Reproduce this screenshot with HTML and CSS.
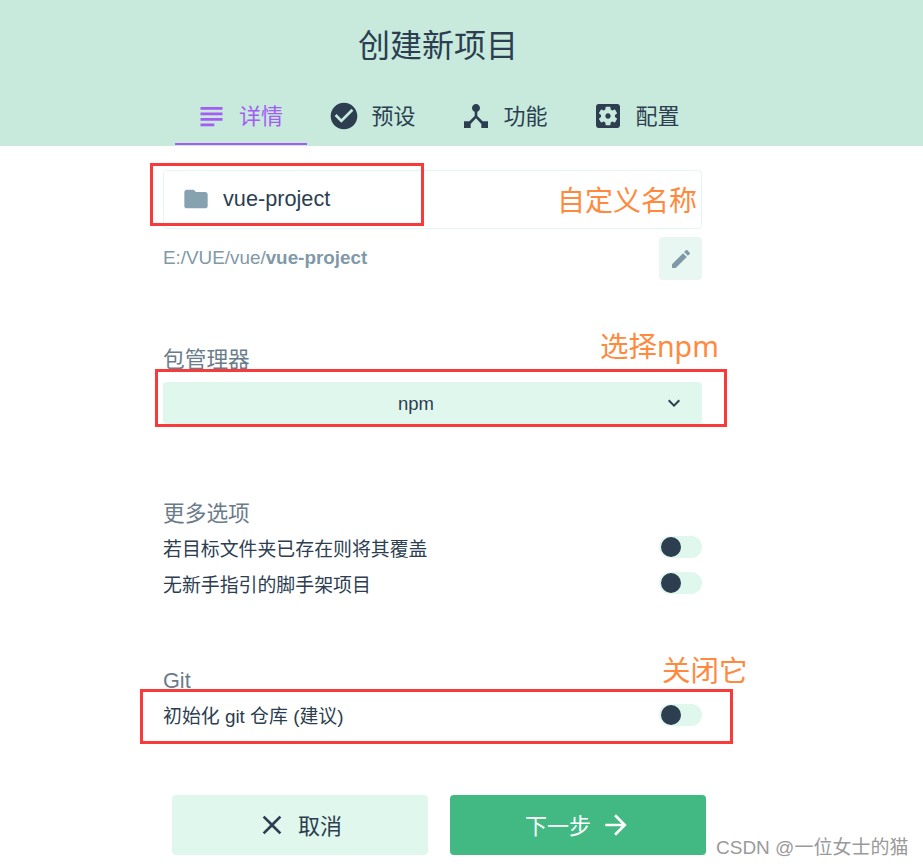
FILE: index.html

```html
<!DOCTYPE html>
<html lang="zh-CN">
<head>
  <meta charset="UTF-8">
  <meta name="viewport" content="width=device-width, initial-scale=1.0">
  <title>创建新项目</title>
  <link rel="stylesheet" href="styles.css">
</head>
<body>
  <div class="page">
    <header class="header">
      <h1 class="title">创建新项目</h1>
      <nav class="tabs">
        <div class="tab active">
          <svg width="33" height="33" viewBox="0 0 24 24" fill="currentColor"><path d="M14 17H4v2h10v-2zm6-8H4v2h16V9zM4 15h16v-2H4v2zM4 5v2h16V5H4z"/></svg>
          <span>详情</span>
        </div>
        <div class="tab">
          <svg width="32" height="32" viewBox="0 0 24 24" fill="currentColor"><path d="M12 2C6.480 2 2 6.480 2 12s4.480 10 10 10 10-4.480 10-10S17.520 2 12 2zm-2 15-5-5 1.410-1.410L10 14.170l7.590-7.590L19 8l-9 9z"/></svg>
          <span>预设</span>
        </div>
        <div class="tab">
          <svg width="32" height="32" viewBox="0 0 24 24" fill="currentColor"><path d="m17 16-4-4V8.820C14.160 8.400 15 7.300 15 6c0-1.660-1.340-3-3-3S9 4.340 9 6c0 1.300.840 2.400 2 2.820V12l-4 4H3v5h5v-3.050l4-4.200 4 4.200V21h5v-5h-4z"/></svg>
          <span>功能</span>
        </div>
        <div class="tab">
          <svg width="32" height="32" viewBox="0 0 24 24" fill="currentColor"><path d="M12 10c-1.100 0-2 .9-2 2s.9 2 2 2 2-.9 2-2-.9-2-2-2zm7-7H5c-1.110 0-2 .9-2 2v14c0 1.100.890 2 2 2h14c1.110 0 2-.9 2-2V5c0-1.100-.890-2-2-2zm-1.750 9c0 .23-.02.46-.05.68l1.480 1.160c.13.11.17.3.08.45l-1.400 2.420c-.09.15-.27.21-.43.15l-1.740-.7c-.36.28-.76.51-1.180.69l-.26 1.850c-.03.17-.18.3-.35.3h-2.800c-.17 0-.32-.13-.35-.29l-.26-1.850c-.43-.18-.82-.41-1.180-.69l-1.740.7c-.16.06-.34 0-.43-.15l-1.400-2.420c-.09-.15-.05-.34.08-.45l1.480-1.160c-.03-.23-.05-.46-.05-.69 0-.23.02-.46.05-.68l-1.480-1.160c-.13-.11-.17-.3-.08-.45l1.400-2.420c.09-.15.27-.21.43-.15l1.740.7c.36-.28.76-.51 1.180-.69l.26-1.850c.03-.17.18-.3.35-.3h2.800c.17 0 .32.13.35.29l.26 1.850c.43.18.82.41 1.180.69l1.740-.7c.16-.06.34 0 .43.15l1.400 2.420c.09.15.05.34-.08.45l-1.480 1.160c.03.23.05.46.05.69z"/></svg>
          <span>配置</span>
        </div>
      </nav>
    </header>

    <main class="content">
      <div class="name-input">
        <svg width="28" height="28" viewBox="0 0 24 24" fill="#86a1b0"><path d="M10 4H4c-1.100 0-2 .9-2 2v12c0 1.100.9 2 2 2h16c1.100 0 2-.9 2-2V8c0-1.100-.9-2-2-2h-8l-2-2z"/></svg>
        <span>vue-project</span>
      </div>
      <div class="path-row">
        <div class="path">E:/VUE/vue/<b>vue-project</b></div>
        <button class="edit-button">
          <svg width="24" height="24" viewBox="0 0 24 24" fill="#7f99a8"><path d="M3 17.250V21h3.750L17.810 9.940l-3.750-3.750L3 17.250zM20.710 7.040c.39-.39.39-1.020 0-1.410l-2.340-2.340c-.39-.39-1.020-.39-1.410 0l-1.830 1.830 3.750 3.750 1.830-1.830z"/></svg>
        </button>
      </div>

      <section class="group group-manager">
        <div class="group-title">包管理器</div>
        <div class="select">
          <span>npm</span>
          <svg class="select-arrow" width="24" height="24" viewBox="0 0 24 24" fill="#2c3e50"><path d="M7.410 8.590 12 13.170l4.590-4.580L18 10l-6 6-6-6 1.410-1.410z"/></svg>
        </div>
      </section>

      <section class="group group-more">
        <div class="group-title">更多选项</div>
        <div class="option"><span>若目标文件夹已存在则将其覆盖</span><span class="toggle"></span></div>
        <div class="option"><span>无新手指引的脚手架项目</span><span class="toggle"></span></div>
      </section>

      <section class="group group-git">
        <div class="group-title">Git</div>
        <div class="option"><span>初始化 git 仓库 (建议)</span><span class="toggle"></span></div>
      </section>

      <div class="actions">
        <button class="btn btn-cancel">
          <svg width="32" height="32" viewBox="0 0 24 24" fill="currentColor"><path d="M19 6.410 17.590 5 12 10.590 6.410 5 5 6.410 10.590 12 5 17.590 6.410 19 12 13.410 17.590 19 19 17.590 13.410 12 19 6.410z"/></svg>
          <span>取消</span>
        </button>
        <button class="btn btn-next">
          <span>下一步</span>
          <svg width="32" height="32" viewBox="0 0 24 24" fill="currentColor"><path d="m12 4-1.410 1.410L16.170 11H4v2h12.170l-5.580 5.590L12 20l8-8z"/></svg>
        </button>
      </div>
    </main>
  </div>

  <!-- annotations drawn over the screenshot -->
  <div class="mark mark-name"></div>
  <div class="mark mark-npm"></div>
  <div class="mark mark-git"></div>
  <div class="note note-name">自定义名称</div>
  <div class="note note-npm">选择npm</div>
  <div class="note note-git">关闭它</div>
  <div class="watermark">CSDN @一位女士的猫</div>
</body>
</html>
```

FILE: styles.css

```css
html, body {
  margin: 0;
  padding: 0;
}

body {
  position: relative;
  height: 867px;
  overflow: hidden;
  background-color: #ffffff;
  color: #2c3e50;
  font-family: "Liberation Sans", "Noto Sans CJK SC", sans-serif;
}

.header {
  height: 146px;
  background-color: #c7eadd;
  box-sizing: border-box;
  padding-top: 23px;
}

.title {
  margin: 0;
  padding-right: 47px;
  font-size: 32px;
  font-weight: 400;
  line-height: 46px;
  text-align: center;
  color: #2c3e50;
}

.tabs {
  display: flex;
  width: 528px;
  margin: 23px 0 0 175px;
}

.tab {
  width: 132px;
  height: 53px;
  box-sizing: border-box;
  display: flex;
  align-items: center;
  justify-content: center;
  gap: 11px;
  padding: 0 2px 5px 0;
  font-size: 22px;
}

.tab span {
  margin-bottom: 4px;
}

.tab.active {
  color: #a55cf5;
  border-bottom: 2px solid #a55cf5;
  padding: 0 4px 3px 0;
}

.content {
  width: 539px;
  margin-left: 163px;
}

.name-input {
  margin-top: 24px;
  height: 59px;
  box-sizing: border-box;
  border: 1px solid #e0f8ef;
  border-radius: 4px;
  display: flex;
  align-items: center;
  gap: 13px;
  padding: 0 0 2px 18px;
  font-size: 21.7px;
}

.path-row {
  display: flex;
  align-items: center;
  justify-content: space-between;
  margin-top: 8px;
  color: #7f99a8;
  font-size: 18.85px;
}

.path {
  margin-bottom: 2px;
}

.edit-button {
  width: 43px;
  height: 43px;
  border: none;
  border-radius: 4px;
  background-color: #e8f7f1;
  padding: 0;
  display: flex;
  align-items: center;
  justify-content: center;
}

.group-title {
  font-size: 21.7px;
  line-height: 30px;
  color: #6a7c8a;
}

.group-manager {
  margin-top: 65px;
}

.select {
  position: relative;
  height: 42px;
  margin-top: 7px;
  border-radius: 4px;
  background-color: #e0f7ee;
  display: flex;
  align-items: center;
  justify-content: center;
  font-size: 18.5px;
  padding: 2px 33px 0 0;
  box-sizing: border-box;
}

.select-arrow {
  position: absolute;
  right: 16px;
  top: 9px;
}

.group-more {
  margin-top: 75px;
}

.option {
  display: flex;
  align-items: center;
  justify-content: space-between;
  height: 36px;
  font-size: 18.9px;
}

.toggle {
  position: relative;
  width: 43px;
  height: 22px;
  border-radius: 11px;
  background-color: #e0f7ee;
}

.toggle::before {
  content: "";
  position: absolute;
  left: 2px;
  top: 1px;
  width: 20px;
  height: 20px;
  border-radius: 50%;
  background-color: #2c3e50;
}

.group-git {
  margin-top: 65px;
}

.group-git .toggle {
  margin-top: 2px;
}

.actions {
  display: flex;
  gap: 22px;
  margin: 63px 0 0 9px;
}

.btn {
  flex: none;
  width: 256px;
  height: 60px;
  border: none;
  border-radius: 4px;
  display: flex;
  align-items: center;
  justify-content: center;
  gap: 10px;
  padding: 0 2px 0 0;
  font-family: inherit;
  font-size: 22px;
}

.btn span {
  margin-bottom: 3px;
}

.btn-cancel {
  background-color: #e0f7ee;
  color: #2c3e50;
}

.btn-next {
  gap: 9px;
  padding: 0 0 0 1px;
  background-color: #42b983;
  color: #ffffff;
}

/* annotations */
.mark {
  position: absolute;
  box-sizing: border-box;
  border: 3px solid #f93a3a;
}

.mark-name {
  left: 150px;
  top: 163px;
  width: 274px;
  height: 63px;
}

.mark-npm {
  left: 155px;
  top: 369px;
  width: 572px;
  height: 58px;
}

.mark-git {
  left: 140px;
  top: 689px;
  width: 593px;
  height: 55px;
}

.note {
  position: absolute;
  color: #ff8a3d;
  font-size: 28px;
  line-height: 34px;
  white-space: nowrap;
}

.note-name {
  left: 557px;
  top: 185px;
}

.note-npm {
  left: 600px;
  top: 329px;
  font-size: 28.5px;
  font-family: "Noto Sans", "Noto Sans CJK SC", sans-serif;
}

.note-git {
  left: 662px;
  top: 654px;
  font-size: 28.5px;
}

.watermark {
  position: absolute;
  left: 716px;
  top: 836px;
  font-size: 19px;
  line-height: 24px;
  color: #9a9a9a;
  white-space: nowrap;
}
```
